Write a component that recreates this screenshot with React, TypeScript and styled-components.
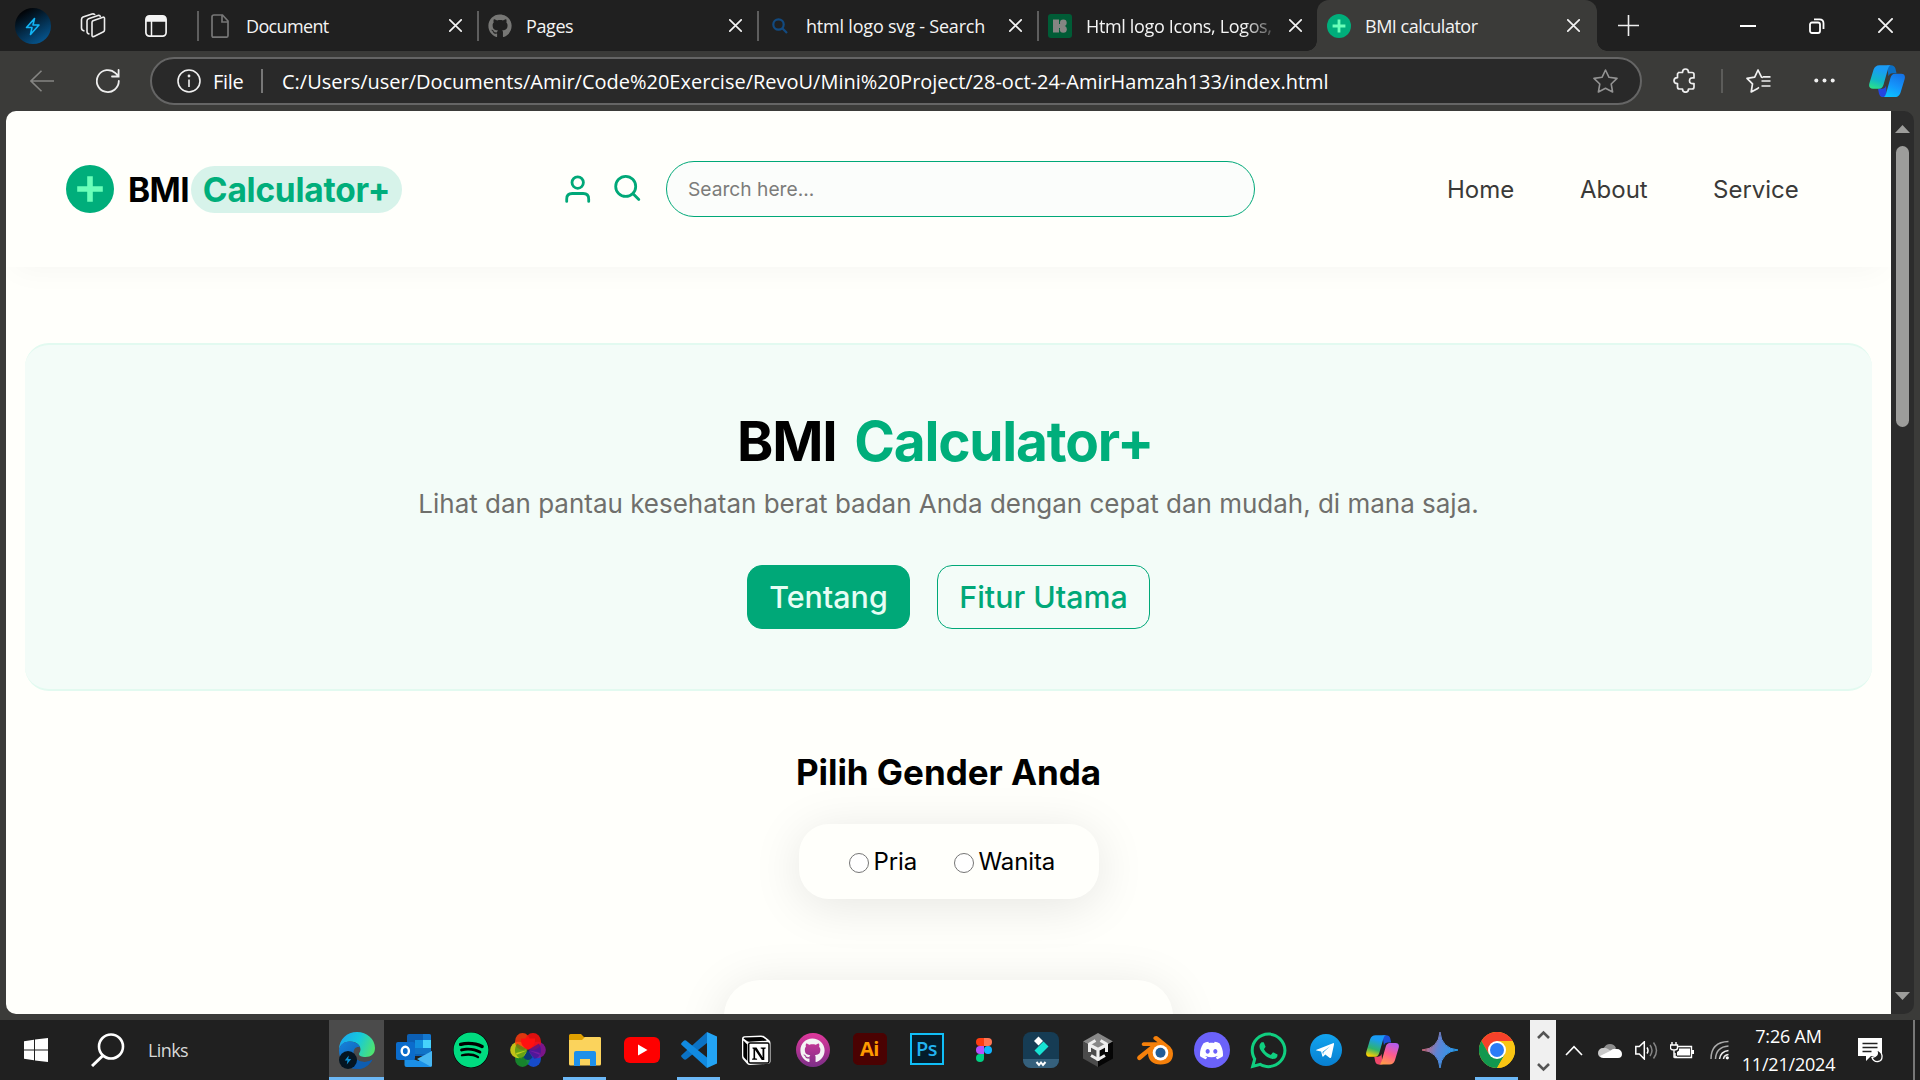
import React from 'react';
import styled, { createGlobalStyle } from 'styled-components';
import { FaGithub, FaSpotify, FaWhatsapp } from 'react-icons/fa';
import { SiDiscord } from 'react-icons/si';

const ui = '"Open Sans", "Noto Sans", sans-serif';
const green = '#00a878';

const Global = createGlobalStyle`
  * { box-sizing: border-box; }
  body { margin: 0; background: #202020; overflow: hidden; }
  svg { display: block; flex: none; }
`;

const Screen = styled.div`
  width: 1920px;
  height: 1080px;
  display: flex;
  flex-direction: column;
  overflow: hidden;
  background: #3b3b39;
  font-family: ${ui};
  white-space: nowrap;
`;

/* ---------- Tab strip ---------- */
const TabStrip = styled.div`
  height: 51px;
  background: #202020;
  display: flex;
  align-items: center;
`;
const Tools = styled.div`
  width: 197px;
  flex: none;
  padding-left: 15px;
  display: flex;
  align-items: center;
`;
const Slot = styled.div<{ $w: number }>`
  width: ${p => p.$w}px;
  height: 100%;
  display: flex;
  align-items: center;
  justify-content: center;
  flex: none;
`;
const Tab = styled.div`
  position: relative;
  width: 280px;
  height: 51px;
  flex: none;
  padding-right: 10px;
  display: flex;
  align-items: center;
`;
const ActiveTab = styled(Tab)`
  padding-left: 1px;
  padding-right: 12px;
  background: #3b3b39;
  border-radius: 12px 12px 0 0;
  &::before, &::after {
    content: "";
    position: absolute;
    bottom: 0;
    width: 10px;
    height: 10px;
  }
  &::before { left: -10px; background: radial-gradient(circle at 0 0, transparent 9.5px, #3b3b39 10px); }
  &::after { right: -10px; background: radial-gradient(circle at 100% 0, transparent 9.5px, #3b3b39 10px); }
`;
const TabIcon = styled.div`
  width: 24px;
  margin-left: 9px;
  flex: none;
  display: flex;
  justify-content: center;
`;
const Divider = styled.div<{ $h: number; $c?: string }>`
  width: 2px;
  height: ${p => p.$h}px;
  background: ${p => p.$c || '#5e5e5e'};
  flex: none;
`;
const TabTitle = styled.div<{ $ls?: number; $fade?: boolean }>`
  flex: 1;
  margin: 0 8px 0 14px;
  min-width: 0;
  overflow: hidden;
  font-size: 18px;
  line-height: 30px;
  letter-spacing: ${p => p.$ls ?? -0.5}px;
  color: #f4f4f4;
  ${p => p.$fade && 'mask-image: linear-gradient(90deg, #000 158px, rgba(0,0,0,.2) 188px);'}
`;
const WindowButtons = styled.div`
  flex: 1;
  padding-left: 81px;
  display: flex;
  align-items: center;
  gap: 53px;
`;

/* ---------- Toolbar ---------- */
const Toolbar = styled.div`
  height: 60px;
  display: flex;
  align-items: center;
`;
const NavButtons = styled.div`
  width: 150px;
  padding-left: 30px;
  display: flex;
  align-items: center;
  gap: 42px;
`;
const AddressBar = styled.div`
  width: 1492px;
  height: 48px;
  border: 2px solid #656565;
  border-radius: 24px;
  background: #292929;
  display: flex;
  align-items: center;
  padding-left: 25px;
  color: #fff;
  font-size: 20px;
`;
const FileLabel = styled.span`
  width: 48px;
  margin-left: 12px;
  letter-spacing: -0.3px;
`;
const Url = styled.span`
  flex: 1;
  margin-left: 19px;
  letter-spacing: -0.01px;
`;
const ToolbarEnd = styled.div`
  flex: 1;
  padding-left: 31px;
  display: flex;
  align-items: center;
`;
const Gap = styled.div<{ $w: number }>`
  width: ${p => p.$w}px;
  flex: none;
`;

/* ---------- Viewport ---------- */
const Viewport = styled.div`
  height: 903px;
  margin: 0 6px 6px;
  display: flex;
  border-radius: 10px;
  overflow: hidden;
`;
const Page = styled.div`
  width: 1885px;
  height: 903px;
  overflow: hidden;
  background: #fffffb;
  font-family: Inter, sans-serif;
  display: flex;
  flex-direction: column;
  align-items: center;
`;
const ScrollTrack = styled.div`
  width: 23px;
  background: #2c2c2c;
  display: flex;
  flex-direction: column;
  align-items: center;
  padding: 14px 0 14px;
`;
const Thumb = styled.div`
  width: 13px;
  height: 281px;
  margin: 13px 0 auto;
  border-radius: 7px;
  background: #9d9d9b;
`;
const Header = styled.header`
  width: 100%;
  height: 156px;
  flex: none;
  padding-left: 60px;
  display: flex;
  align-items: center;
  box-shadow: 0 10px 30px -8px rgba(0, 0, 0, 0.04);
`;
const Brand = styled.div`
  width: 499px;
  display: flex;
  align-items: center;
  font-size: 33.5px;
  font-weight: 700;
  letter-spacing: -0.6px;
  color: #000;
`;
const BrandName = styled.span`
  margin-left: 14px;
  padding-top: 2px;
  width: 63px;
`;
const Pill = styled.span`
  width: 211px;
  height: 47px;
  padding-top: 1px;
  line-height: 47px;
  border-radius: 24px;
  text-align: center;
  letter-spacing: -0.25px;
  color: #00ae7b;
  background: #d7f3ea;
`;
const HeaderIcons = styled.div`
  width: 101px;
  display: flex;
  gap: 23px;
`;
const SearchInput = styled.div`
  width: 589px;
  height: 56px;
  line-height: 55px;
  border: 1.5px solid ${green};
  border-radius: 28px;
  padding-left: 21px;
  background: #fbfdfb;
  font-size: 19.2px;
  color: #7c7c7a;
`;
const Nav = styled.nav`
  margin-left: 192px;
  display: flex;
  font-size: 24px;
  color: #3a3a38;
`;
const NavLink = styled.a<{ $w: number }>`
  width: ${p => p.$w}px;
`;

const Hero = styled.section`
  width: 1847px;
  height: 348px;
  flex: none;
  margin-top: 76px;
  border: solid #e2faf0;
  border-width: 2px 0;
  border-radius: 24px;
  background: #f3fcf8;
  display: flex;
  flex-direction: column;
  align-items: center;
`;
const HeroTitle = styled.h1`
  margin: 68px 7px 0 0;
  font-size: 55px;
  line-height: 56px;
  font-weight: 700;
  letter-spacing: -1.2px;
  color: #000;
`;
const Accent = styled.span`
  color: #00ae7b;
  margin-left: 6px;
`;
const Subtitle = styled.p`
  margin: 17px 0 43px;
  font-size: 26px;
  line-height: 36px;
  letter-spacing: -0.01px;
  color: #6f6f6c;
`;
const Actions = styled.div`
  display: flex;
  gap: 27px;
`;
const Action = styled.button<{ $primary?: boolean; $w: number }>`
  width: ${p => p.$w}px;
  height: 64px;
  padding: 0;
  border: 1.5px solid ${green};
  border-radius: 15px;
  background: ${p => (p.$primary ? green : 'transparent')};
  color: ${p => (p.$primary ? '#e6fdf4' : green)};
  font: 500 30.4px/60px Inter, sans-serif;
`;
const SectionTitle = styled.h2`
  margin: 59px 0 30px;
  font-size: 35px;
  line-height: 44px;
  font-weight: 700;
  letter-spacing: -0.04px;
  color: #000;
`;
const Card = styled.div<{ $w: number; $h: number; $r: number }>`
  width: ${p => p.$w}px;
  height: ${p => p.$h}px;
  flex: none;
  margin-bottom: 81px;
  border-radius: ${p => p.$r}px;
  background: #fffffb;
  box-shadow: 0 7px 50px rgba(0, 0, 0, 0.1);
  display: flex;
  align-items: center;
  padding-left: 50px;
`;
const RadioLabel = styled.label<{ $w: number }>`
  width: ${p => p.$w}px;
  display: flex;
  align-items: center;
  gap: 5px;
  font-size: 24px;
  letter-spacing: -0.1px;
  color: #000;
`;
const Radio = styled.span`
  width: 20px;
  height: 20px;
  margin-top: 3px;
  border: 1.5px solid #767676;
  border-radius: 50%;
  background: #fff;
`;

/* ---------- Taskbar ---------- */
const Taskbar = styled.div`
  height: 60px;
  background: #202020;
  display: flex;
  align-items: stretch;
`;
const LinksLabel = styled.div`
  width: 180px;
  flex: none;
  line-height: 60px;
  font-size: 18px;
  letter-spacing: -0.6px;
  color: #d8d8d8;
`;
const AppButton = styled.div<{ $state?: 'active' | 'open' }>`
  width: 57px;
  flex: none;
  display: flex;
  align-items: center;
  justify-content: center;
  background: ${p => (p.$state === 'active' ? 'linear-gradient(#4b4b4b,#4b4b4b) 1px 0 / 55px 60px no-repeat' : 'none')};
  position: relative;
  &::after {
    content: ${p => (p.$state ? '""' : 'none')};
    position: absolute;
    bottom: 0;
    left: ${p => (p.$state === 'active' ? 1 : 7)}px;
    right: ${p => (p.$state === 'active' ? 1 : 7)}px;
    height: 3px;
    background: #6cb8f6;
  }
`;
const AppTile = styled.div<{ $bg: string; $fg: string; $line: string; $bold?: boolean }>`
  width: 34px;
  height: 32px;
  margin-bottom: 3px;
  border: 2px solid ${p => p.$line};
  border-radius: ${p => (p.$bg === p.$line ? 5 : 0)}px;
  background: ${p => p.$bg};
  color: ${p => p.$fg};
  font: ${p => (p.$bold ? 700 : 600)} 20px/27px "Open Sans", sans-serif;
  letter-spacing: -0.5px;
  text-align: center;
`;
const ScrollBox = styled.div`
  width: 26px;
  flex: none;
  margin-left: 5px;
  background: #f0f0f0;
  display: flex;
  flex-direction: column;
  align-items: center;
  justify-content: space-between;
  padding: 10px 0 8px;
`;
const Tray = styled.div`
  width: 177px;
  flex: none;
  padding-left: 9px;
  display: flex;
  align-items: center;
`;
const Clock = styled.div`
  width: 111px;
  flex: none;
  padding-top: 2px;
  color: #fff;
  font-size: 18px;
  line-height: 28px;
  letter-spacing: -0.2px;
  text-align: center;
`;
const NoteArea = styled.div`
  width: 69px;
  flex: none;
  display: flex;
  align-items: center;
  padding-left: 14px;
`;

/* ---------- Drawings ---------- */
const Cross = ({ s = 13, w = 1.7 }: { s?: number; w?: number }) => (
  <svg width={s} height={s} viewBox="0 0 13 13" stroke="#f2f2f2" strokeWidth={w} strokeLinecap="round">
    <path d="M.8.8l11.4 11.4M12.2.8L.8 12.2" />
  </svg>
);
const PlusBadge = ({ size }: { size: number }) => (
  <svg width={size} height={size} viewBox="0 0 48 48">
    <circle cx="24" cy="24" r="24" fill="#00ae7b" />
    <path d="M24 14v20M14 24h20" stroke="#6affb9" strokeWidth="5.6" strokeLinecap="square" />
  </svg>
);
const Bolt = ({ size }: { size: number }) => (
  <svg width={size} height={size} viewBox="0 0 36 36">
    <defs>
      <linearGradient id="bolt" x1=".2" y1="0" x2=".8" y2="1">
        <stop offset=".1" stopColor="#020509" /><stop offset="1" stopColor="#065a96" />
      </linearGradient>
    </defs>
    <circle cx="18" cy="18" r="18" fill="url(#bolt)" />
    <path d="M19.5 10.5l-8 9h5.5l-1.5 7 8.500-9.500h-6z" fill="#07345a" stroke="#12b5f5" strokeWidth="1.6" strokeLinejoin="round" />
  </svg>
);
const Copilot = ({ size, warm }: { size: number; warm?: boolean }) => {
  const id = warm ? 'w' : 'c';
  return (
    <svg width={size} height={size * 0.9} viewBox="0 0 36 32">
      <defs>
        <linearGradient id={id + 'a'} x1=".6" y1="0" x2=".3" y2="1">
          <stop offset=".2" stopColor="#1a9cf5" /><stop offset=".65" stopColor={warm ? '#2fb46b' : '#11b7c8'} /><stop offset="1" stopColor={warm ? '#ffd000' : '#2adf8c'} />
        </linearGradient>
        <linearGradient id={id + 'b'} x1=".7" y1="0" x2=".3" y2="1">
          <stop offset="0" stopColor={warm ? '#b45cf0' : '#1573e6'} /><stop offset=".5" stopColor={warm ? '#ff5b8c' : '#1494fb'} /><stop offset="1" stopColor={warm ? '#ff9b4a' : '#0bc2ff'} />
        </linearGradient>
      </defs>
      <path d="M18 0h4q3.500 0 4.500 3.500L27.500 8h-4q-3 0-4 3z" fill={warm ? '#1d50d8' : '#0b6fc4'} />
      <path d="M18 32h-4q-3 0-4-3.500L9 23.500h4q3 0 4-3z" fill={warm ? '#f0486a' : '#2445e0'} />
      <path d="M10.500 0H22q-2 0-3 3.500L14.500 19.500Q13.300 23.500 10 23.500H4Q-1 23.500.4 18L4.500 4.500Q6 0 10.500 0z" fill={`url(#${id}a)`} />
      <path d="M25.500 32H14q2 0 3-3.500l4.500-16Q22.700 8.500 26 8.500h6q5 0 3.600 5.500L31.500 27.500Q30 32 25.500 32z" fill={`url(#${id}b)`} />
    </svg>
  );
};
const Chevron = ({ up, w, h, c, sw }: { up?: boolean; w: number; h: number; c: string; sw: number }) => (
  <svg width={w} height={h} viewBox={`0 0 ${w} ${h}`} fill="none" stroke={c} strokeWidth={sw}>
    <path d={up ? `M1 ${h - 1}L${w / 2} ${sw}L${w - 1} ${h - 1}` : `M1 1L${w / 2} ${h - sw}L${w - 1} 1`} />
  </svg>
);

const EdgeLogo = () => (
  <svg width="36" height="37" viewBox="0 0 36 37">
    <defs>
      <linearGradient id="eg" x1="0" y1=".3" x2="1" y2=".6"><stop offset="0" stopColor="#1aa7ee" /><stop offset=".5" stopColor="#15c9dd" /><stop offset="1" stopColor="#4fe36f" /></linearGradient>
      <linearGradient id="eb" x1="0" y1="0" x2="1" y2="1"><stop offset="0" stopColor="#1683dd" /><stop offset="1" stopColor="#0b4c9d" /></linearGradient>
    </defs>
    <path d="M0 18C0 7 8 0 18 0s18 7 18 16c0 6-4 9-9.500 9-4 0-6.500-1-6.500-3 0-1.500 1.500-2 1.500-4.500C21.500 13 17 9.500 11 9.500 5 9.500 1 13 0 18z" fill="url(#eg)" />
    <path d="M0 18C1 12 5.500 9.500 11 9.500c5 0 9 2.500 10.200 6-3-1.500-6.700.5-6.700 5.500 0 6 6 9 11 9 3 0 5.500-1 8-2.500C30.500 33 25 37 18 37 7 37 0 29 0 18z" fill="url(#eb)" />
    <path d="M14.500 21c0 6 6 9 11 9 3 0 5.500-1 8-2.500C30.500 33 25 37 20 37c-7-1-9-10-5.500-16z" fill="#0e5eb0" />
    <g transform="translate(0 19) scale(.5)"><circle cx="18" cy="18" r="18" fill="#041522" /><path d="M19.500 9l-8 10h5.500l-1.500 8 9-11h-6z" fill="#0c93d8" /></g>
  </svg>
);
const OutlookLogo = () => (
  <svg width="36" height="33" viewBox="0 0 36 33">
    <rect x="11" y="0" width="24" height="22" rx="2" fill="#0c5fb4" />
    <path d="M19 6h8v8h-8z" fill="#1290df" /><path d="M27 6h8v8h-8z" fill="#46d2fb" /><path d="M27 0h6a2 2 0 012 2v4h-8z" fill="#1478cf" /><path d="M19 14h16v6H19z" fill="#1173c7" />
    <path d="M8.500 22l14 5 13.500-10v14a2 2 0 01-2 2h-23.500a2 2 0 01-2-2z" fill="#1b8fe6" /><path d="M36 17v14a2 2 0 01-1 1.700L21 25z" fill="#48b7f2" />
    <rect x="0" y="8" width="19" height="18" rx="2" fill="#0b6ccc" />
    <ellipse cx="9.300" cy="17" rx="3.600" ry="4.300" fill="none" stroke="#fff" strokeWidth="2.400" />
  </svg>
);
const PetalsLogo = () => (
  <svg width="36" height="34" viewBox="0 0 36 34">
    <g fillOpacity=".85">
      <ellipse cx="23.500" cy="25.500" rx="7.500" ry="8.500" fill="#1554e8" /><ellipse cx="12.500" cy="25.500" rx="7.500" ry="8.500" fill="#16952f" />
      <circle cx="8.500" cy="17" r="8.300" fill="#dfe018" /><circle cx="27.500" cy="17" r="8.300" fill="#8b149c" />
      <ellipse cx="12.500" cy="8.500" rx="7.500" ry="8.500" fill="#ff3b0d" /><ellipse cx="23" cy="8.500" rx="8" ry="8.500" fill="#ff0d0d" />
    </g>
    <path d="M11 5.500h14q1 7-7 11.500-8-4-7-11.500z" fill="#ff1010" />
    <path d="M18 17L7 10.500Q3.500 17 6 22zM18 17l-6.500 9Q6 24 6 20z" fill="#3f8f14" fillOpacity=".7" />
    <path d="M18 17l11-6.500q3.500 6 1 11.500zM18 17l6.500 9Q30 24 30 20z" fill="#3d1696" fillOpacity=".7" />
    <path d="M18 17l-4.500 7.500q4.500 5 9 0z" fill="#0b3a78" />
  </svg>
);
const FolderLogo = () => (
  <svg width="32" height="32" viewBox="0 0 32 32">
    <path d="M0 1.500Q0 0 1.500 0H12l3 3H30.500Q32 3 32 4.500V10H0z" fill="#e0a000" />
    <path d="M0 6h13l3-3h14.500Q32 3 32 4.500V30q0 1.500-1.500 1.500h-29Q0 31.500 0 30z" fill="#fbd35c" />
    <path d="M5 32V19q0-2 2-2h18q2 0 2 2v13h-6v-7H11v7z" fill="#1e90ea" />
  </svg>
);
const YouTubeLogo = () => (
  <svg width="36" height="26" viewBox="0 0 36 26"><rect width="36" height="26" rx="6" fill="#f00" /><path d="M14 7.500v11l9.500-5.500z" fill="#fff" /></svg>
);
const CodeLogo = () => (
  <svg width="36" height="36" viewBox="0 0 36 36">
    <path d="M26 0L36 4.500v27L26 36z" fill="#23a4f5" />
    <path d="M26 0v11L5 27.500Q3.500 28 2.500 27L.5 25Q-.3 24 .7 23z" fill="#0b72c4" />
    <path d="M26 36V25.500L5 8.500Q3.500 8 2.500 9L.5 11Q-.3 12 .7 13z" fill="#118ae0" />
  </svg>
);
const NotionLogo = () => (
  <svg width="30" height="31" viewBox="0 0 30 31">
    <path d="M1 3.500Q1 1.500 3 1.300L20 .5q2 0 3.500 1L28 5q1.500 1 1.500 3v18.500q0 2-2 2.200L9 30q-2 0-3-1.300L1.800 24Q1 23 1 21z" fill="#fff" />
    <path d="M2.500 3.500Q3 2.700 4 2.600L20 1.900q1 0 2 .6l3.500 2.500q.5.600-.5.700L8 6.700Q7 6.700 6 6zM2.300 5.500L6.300 9.500V26L3 22.500q-.7-1-.7-2z" fill="#000" />
    <rect x="7.700" y="8" width="20.300" height="20" rx="1.500" fill="none" stroke="#000" strokeWidth="1.500" />
    <path d="M11.500 12.500h4l6 9.500v-8l-1.800-.6v-.9h5v.9l-1.400.5V25h-2.500l-6.700-10v8.300l2 .5v.9h-5v-.9l1.400-.5v-9.200l-1-.6z" fill="#000" />
  </svg>
);
const GithubDesktop = styled.div`
  width: 34px;
  height: 34px;
  border-radius: 50%;
  background: linear-gradient(#e0389c, #7b2f87);
  display: flex;
  align-items: center;
  justify-content: center;
`;
const FigmaLogo = () => (
  <svg width="16" height="24" viewBox="0 0 16 24">
    <path d="M4 0h4v8H4a4 4 0 010-8z" fill="#ff3d12" /><path d="M8 0h4a4 4 0 010 8H8z" fill="#ff7452" />
    <path d="M4 8h4v8H4a4 4 0 010-8z" fill="#b850ff" /><circle cx="12" cy="12" r="4" fill="#0fb4ff" />
    <path d="M4 16h4v4a4 4 0 11-4-4z" fill="#00d084" />
  </svg>
);
const FilmoraLogo = () => (
  <svg width="36" height="36" viewBox="0 0 36 36">
    <rect width="36" height="36" rx="8" fill="#163c54" /><path d="M0 27h36v1a8 8 0 01-8 8H8a8 8 0 01-8-8z" fill="#35607c" />
    <path d="M15.500 4.500l4.500 4.500-4.500 4.500L11 9z" fill="#fff" /><path d="M20.500 9.500L25.500 14.500 16.500 23.500 11.500 18.500z" fill="#17e3d3" />
    <path d="M13.500 30l2.500 3 2-2.500 2 2.500 2.500-3" fill="none" stroke="#fff" strokeWidth="2" />
  </svg>
);
const UnityLogo = () => (
  <svg width="30" height="34" viewBox="0 0 30 34">
    <path d="M15 0l15 8.500L15 17 0 8.500z" fill="#888" /><path d="M0 8.500L15 17v17L0 25.500z" fill="#4b4b4b" /><path d="M30 8.500L15 17v17l15-8.500z" fill="#050505" />
    <path d="M15 16.500v11M15 16.500L6.500 12M15 16.500l8.500-4.500" stroke="#eee" strokeWidth="3.200" />
    <path d="M12.500 7.500L6.500 11v8M17.500 7.500l6 3.500v8M8 22.500l7 4 7-4" fill="none" stroke="#eee" strokeWidth="3" strokeLinejoin="round" />
  </svg>
);
const BlenderLogo = () => (
  <svg width="36" height="29" viewBox="0 0 36 29">
    <path d="M17.300.6q2-1.200 4 .4L33 10.500q3 3 3 7Q36 28.500 23.500 28.500 11.500 28 11 17.500L4 23.500Q2 25 .6 23.300q-1.200-2 .6-3.500L13.500 10H6.500q-1.800-.2-1.800-1.800T6.500 6.300h14L17 3.500q-1.500-1.500.3-2.900z" fill="#f5800b" />
    <circle cx="23.500" cy="16.800" r="7.800" fill="#fff" /><circle cx="23.500" cy="16.800" r="5" fill="#225c96" />
  </svg>
);
const DiscordBadge = styled.div`
  width: 36px;
  height: 36px;
  border-radius: 50%;
  background: #6b62fa;
  display: flex;
  align-items: center;
  justify-content: center;
`;
const TelegramLogo = () => (
  <svg width="32" height="32" viewBox="0 0 32 32">
    <defs><linearGradient id="tg" x1="0" y1="0" x2="0" y2="1"><stop offset="0" stopColor="#12a4ef" /><stop offset="1" stopColor="#087fd0" /></linearGradient></defs>
    <circle cx="16" cy="16" r="16" fill="url(#tg)" />
    <path d="M6.500 15.700L23 9.200q1.300-.4 1 1.300L21.300 23q-.4 1.500-1.800.7l-4.200-3.200-2 2q-.8.600-1-.5l-1.200-4.500-4.600-1q-1-.4 0-.8zM12.500 18l.6 2.800.4-2.600 6.500-6z" fill="#fff" fillRule="evenodd" />
  </svg>
);
const GeminiLogo = () => (
  <svg width="36" height="36" viewBox="0 0 36 36">
    <defs><linearGradient id="gm" x1="0" y1=".3" x2="1" y2=".6"><stop offset=".1" stopColor="#c8687c" /><stop offset=".45" stopColor="#5d84d6" /><stop offset="1" stopColor="#1c9ef0" /></linearGradient></defs>
    <path d="M18 0Q19.500 16.500 36 18 19.500 19.500 18 36 16.500 19.500 0 18 16.500 16.500 18 0z" fill="url(#gm)" stroke="url(#gm)" strokeWidth="1" />
  </svg>
);
const ChromeLogo = () => (
  <svg width="36" height="36" viewBox="0 0 36 36">
    <circle cx="18" cy="18" r="18" fill="#f9c513" />
    <path d="M2.400 9A18 18 0 0133.600 9H18l-7.800 13.500z" fill="#f7412a" />
    <path d="M2.400 9A18 18 0 0018 36l7.800-13.500-7.800-1-7.800 1z" fill="#12984f" />
    <path d="M18 36l7.800-13.500L24 14l2-5h7.600A18 18 0 0118 36z" fill="#f9c513" />
    <circle cx="18" cy="18" r="9" fill="#fff" /><circle cx="18" cy="18" r="7" fill="#2b7cf7" />
  </svg>
);
const SpotifyBadge = styled.div`
  border-radius: 50%;
  background: #000;
`;

type AppEntry = { name: string; state?: 'active' | 'open'; icon: React.ReactNode };
const apps: AppEntry[] = [
  { name: 'edge', state: 'active', icon: <EdgeLogo /> },
  { name: 'outlook', icon: <OutlookLogo /> },
  { name: 'spotify', icon: <SpotifyBadge><FaSpotify size={36} color="#00db80" /></SpotifyBadge> },
  { name: 'petals', icon: <PetalsLogo /> },
  { name: 'explorer', state: 'open', icon: <FolderLogo /> },
  { name: 'youtube', icon: <YouTubeLogo /> },
  { name: 'code', state: 'open', icon: <CodeLogo /> },
  { name: 'notion', icon: <NotionLogo /> },
  { name: 'github', icon: <GithubDesktop><FaGithub size={25} color="#f4f4f4" /></GithubDesktop> },
  { name: 'illustrator', icon: <AppTile $bold $bg="#4b0202" $line="#4b0202" $fg="#ff9a00">Ai</AppTile> },
  { name: 'photoshop', icon: <AppTile $bg="#041c2a" $line="#10bff8" $fg="#22b2ef">Ps</AppTile> },
  { name: 'figma', icon: <FigmaLogo /> },
  { name: 'filmora', icon: <FilmoraLogo /> },
  { name: 'unity', icon: <UnityLogo /> },
  { name: 'blender', icon: <BlenderLogo /> },
  { name: 'discord', icon: <DiscordBadge><SiDiscord size={23} color="#fff" /></DiscordBadge> },
  { name: 'whatsapp', icon: <FaWhatsapp size={41} color="#10cf80" /> },
  { name: 'telegram', icon: <TelegramLogo /> },
  { name: 'copilot', icon: <Copilot size={33} warm /> },
  { name: 'gemini', icon: <GeminiLogo /> },
  { name: 'chrome', state: 'open', icon: <ChromeLogo /> },
];

const tabs = [
  { title: 'Document', ls: -0.65, icon: <svg width="18" height="24" viewBox="0 0 18 24" fill="none" stroke="#767676" strokeWidth="1.700"><path d="M3 1h8.500L17 7v14.500q0 1.700-1.700 1.700H2.700Q1 23.200 1 21.500V3q0-2 2-2zM11 1v7h6" /></svg> },
  { title: 'Pages', ls: -0.4, icon: <FaGithub size={24} color="#777775" /> },
  { title: 'html logo svg - Search', ls: -0.2, icon: <svg width="16" height="16" viewBox="0 0 16 16" fill="none" stroke="#124a80" strokeWidth="2.200"><circle cx="6.500" cy="6.500" r="5.200" /><path d="M10.300 10.300L15 15" /></svg> },
  { title: 'Html logo Icons, Logos,', ls: -0.35, fade: true, icon: <svg width="24" height="24" viewBox="0 0 24 24"><rect width="24" height="24" rx="3" fill="#005c36" /><path d="M5 5.500h6v13H5z" fill="#858583" /><circle cx="15.300" cy="8.800" r="3.400" fill="#858583" /><circle cx="15.300" cy="15.200" r="3.500" fill="#858583" /><path d="M10 10h5v4h-5z" fill="#858583" /></svg> },
];

export default function App() {
  return (
    <Screen>
      <Global />
      <TabStrip>
        <Tools>
          <Bolt size={36} />
          <Slot $w={84}>
            <svg width="26" height="25" viewBox="0 0 26 25" fill="none" stroke="#ececec" strokeWidth="1.600" strokeLinejoin="round">
              <path d="M12 9.500q0-1.200 1-1.700l10-3.600q1.500-.3 1.500 1V17q0 1.200-1 1.700l-9.500 4.800Q12 24 12 22.500z" />
              <path d="M9.500 21q-2.500-.3-2.500-2.500V8q0-1.600 1.500-2.200L18 2.500q2-.5 2.500 1.500" />
              <path d="M4.500 18q-3-.5-3-3V6.500Q1.500 4.800 3 4l9-3q2.200-.6 3 1" />
            </svg>
          </Slot>
          <Slot $w={42}>
            <svg width="22" height="22" viewBox="0 0 22 22"><rect x=".9" y=".9" width="20.200" height="20.200" rx="3.500" fill="none" stroke="#f4f4f4" strokeWidth="1.700" /><path d="M1 4q0-3 3-3h14q3 0 3 3v2.800H1z" fill="#f4f4f4" /><path d="M6.500 6v15" stroke="#f4f4f4" strokeWidth="1.500" /></svg>
          </Slot>
        </Tools>
        {tabs.map(t => (
          <Tab key={t.title}>
            <Divider $h={30} />
            <TabIcon>{t.icon}</TabIcon>
            <TabTitle $ls={t.ls} $fade={t.fade}>{t.title}</TabTitle>
            <Slot $w={24}><Cross /></Slot>
          </Tab>
        ))}
        <ActiveTab>
          <TabIcon><PlusBadge size={24} /></TabIcon>
          <TabTitle>BMI calculator</TabTitle>
          <Slot $w={24}><Cross /></Slot>
        </ActiveTab>
        <Slot $w={62}>
          <svg width="21" height="21" viewBox="0 0 21 21" stroke="#eee" strokeWidth="1.600"><path d="M10.500 0v21M0 10.500h21" /></svg>
        </Slot>
        <WindowButtons>
          <svg width="16" height="2"><rect width="16" height="2" fill="#fff" /></svg>
          <svg width="16" height="16" viewBox="0 0 16 16" fill="none" stroke="#fff" strokeWidth="1.800"><rect x="1" y="4.500" width="10" height="10.500" rx="2" /><path d="M5 1.300h5.500q4 0 4 4V11" /></svg>
          <Cross s={15} w={1.6} />
        </WindowButtons>
      </TabStrip>

      <Toolbar>
        <NavButtons>
          <svg width="24" height="22" viewBox="0 0 24 22" fill="none" stroke="#858583" strokeWidth="1.600"><path d="M24 11H1M11.500.8L1 11l10.500 10.200" /></svg>
          <svg width="24" height="24" viewBox="0 0 24 24" fill="none" stroke="#eee" strokeWidth="1.800" strokeLinecap="round"><path d="M22.800 12A11 11 0 1119.500 4.200L22.500 7M22.600 1v6.500H16" /></svg>
        </NavButtons>
        <AddressBar>
          <svg width="24" height="24" viewBox="0 0 24 24" fill="none" stroke="#f0f0f0" strokeWidth="1.600"><circle cx="12" cy="12" r="11" /><path d="M12 10.500v7.500" /><circle cx="12" cy="7" r=".6" fill="#fff" /></svg>
          <FileLabel>File</FileLabel>
          <Divider $h={24} $c="#777" />
          <Url>C:/Users/user/Documents/Amir/Code%20Exercise/RevoU/Mini%20Project/28-oct-24-AmirHamzah133/index.html</Url>
          <Slot $w={70}><svg width="25" height="24" viewBox="0 0 25 24" fill="none" stroke="#929292" strokeWidth="1.600" strokeLinejoin="round"><path d="M12.500 1l3.500 7.300 8 1.100-5.800 5.600 1.400 8-7.100-3.800L5.400 23l1.400-8L1 9.400l8-1.100z" /></svg></Slot>
        </AddressBar>
        <ToolbarEnd>
          <svg width="24" height="25" viewBox="0 0 24 25" fill="none" stroke="#eee" strokeWidth="1.700" strokeLinejoin="round"><path d="M5 4.500h4.500Q9.500 1 12.500 1t3 3.500H19q2 0 2 2V10q-4.500-.8-4.500 2.700T21 15.500v3.500q0 2-2 2h-3.500Q15.500 24.200 12.500 24.200T9.500 21H6.500q-2 0-2-2v-3.500Q1 15.500 1 12.700t3.500-3V6.500q0-2 2-2" /></svg>
          <Gap $w={24} />
          <Divider $h={24} $c="#5c5c5a" />
          <Gap $w={23} />
          <svg width="25" height="24" viewBox="0 0 25 24" fill="none" stroke="#f0f0f0" strokeWidth="1.700" strokeLinejoin="round"><path d="M17 8.500l-1.500-.3L12 1 8.700 8.200 1 9.400l5.500 5.500L5.200 23l6.500-3.600 1.300-1M15.500 12h9M15.500 17h9M17 7.800h7.500" /></svg>
          <Gap $w={43} />
          <svg width="21" height="5" viewBox="0 0 21 5" fill="#f0f0f0"><circle cx="2.300" cy="2.500" r="2" /><circle cx="10.500" cy="2.500" r="2" /><circle cx="18.700" cy="2.500" r="2" /></svg>
          <Gap $w={34} />
          <Copilot size={36} />
        </ToolbarEnd>
      </Toolbar>

      <Viewport>
        <Page>
          <Header>
            <Brand>
              <PlusBadge size={48} />
              <BrandName>BMI</BrandName>
              <Pill>Calculator+</Pill>
            </Brand>
            <HeaderIcons>
              <svg width="26" height="28" viewBox="0 0 26 28" fill="none" stroke={green} strokeWidth="2.800" strokeLinecap="round"><circle cx="12.700" cy="7.600" r="5.700" /><path d="M1.700 26.400v-2.400q0-5.500 5.500-5.500h11q5.500 0 5.500 5.500v2.400" /></svg>
              <svg width="27" height="27" viewBox="0 0 27 27" fill="none" stroke={green} strokeWidth="2.800" strokeLinecap="round"><circle cx="11.700" cy="11.400" r="10" /><path d="M19.300 19l5.500 5.500" /></svg>
            </HeaderIcons>
            <SearchInput>Search here...</SearchInput>
            <Nav>
              <NavLink $w={133}>Home</NavLink>
              <NavLink $w={133}>About</NavLink>
              <NavLink $w={90}>Service</NavLink>
            </Nav>
          </Header>
          <Hero>
            <HeroTitle>BMI <Accent>Calculator+</Accent></HeroTitle>
            <Subtitle>Lihat dan pantau kesehatan berat badan Anda dengan cepat dan mudah, di mana saja.</Subtitle>
            <Actions>
              <Action $primary $w={163}>Tentang</Action>
              <Action $w={213}>Fitur Utama</Action>
            </Actions>
          </Hero>
          <SectionTitle>Pilih Gender Anda</SectionTitle>
          <Card $w={300} $h={75} $r={30}>
            <RadioLabel $w={105}><Radio />Pria</RadioLabel>
            <RadioLabel $w={110}><Radio />Wanita</RadioLabel>
          </Card>
          <Card $w={449} $h={200} $r={36} />
        </Page>
        <ScrollTrack>
          <svg width="15" height="8"><path d="M0 8L7.500 0 15 8z" fill="#9d9d9b" /></svg>
          <Thumb />
          <svg width="15" height="8"><path d="M0 0h15L7.500 8z" fill="#9d9d9b" /></svg>
        </ScrollTrack>
      </Viewport>

      <Taskbar>
        <Slot $w={72}><svg width="24" height="24" viewBox="0 0 24 24" fill="#fff"><path d="M0 3.300l10-1.500v9.700H0zM11 1.600L24 0v11.500H11zM0 12.500h10v9.700L0 20.700zM11 12.500h13V24l-13-1.600z" /></svg></Slot>
        <Slot $w={71}><svg width="34" height="34" viewBox="0 0 34 34" fill="none" stroke="#fff" strokeWidth="2.600"><circle cx="20" cy="13.500" r="12" /><path d="M12 22.500L1 33" strokeWidth="3" /></svg></Slot>
        <Gap $w={5} />
        <LinksLabel>Links</LinksLabel>
        {apps.map(a => <AppButton key={a.name} $state={a.state}>{a.icon}</AppButton>)}
        <ScrollBox>
          <Chevron up w={13} h={9} c="#555" sw={2.6} />
          <Chevron w={13} h={9} c="#555" sw={2.6} />
        </ScrollBox>
        <Tray>
          <Chevron up w={18} h={11} c="#fff" sw={1.6} />
          <Gap $w={15} />
          <svg width="24" height="16" viewBox="0 0 24 16"><path d="M6 6a6.500 6.500 0 0112 0l-6 5z" fill="#8d8d8d" /><path d="M0 11a5 5 0 015-5q2-.5 4 .5l7 4-13 5Q0 14 0 11z" fill="#c9c9c9" /><path d="M2 14l10-5q3-3 7-2a5 5 0 015 5q0 4-4 4H5q-2 0-3-2z" fill="#fff" /></svg>
          <Gap $w={13} />
          <svg width="23" height="19" viewBox="0 0 23 19" fill="none" stroke="#fff" strokeWidth="1.500"><path d="M.8 5.500v7.500h3.500l5 5V.8l-5 4.700zM12 6.500q2 3 0 6" /><path d="M15 4q4 5.500 0 11M18.500 1.500q6 8 0 16" stroke="#858585" /></svg>
          <Gap $w={12} />
          <svg width="24" height="17" viewBox="0 0 24 17"><path d="M8 4.500h13.500v11H5V11" fill="none" stroke="#fff" strokeWidth="1.400" /><path d="M9 6.500h11v7H7V10l2-1.500z" fill="#fff" /><path d="M21.500 8H24v4h-2.500z" fill="#fff" /><path d="M2 0v3M6 0v3M.5 3h7v3q0 2-3.500 2T.5 6zM4 8v7h3" fill="none" stroke="#fff" strokeWidth="1.400" /></svg>
          <Gap $w={16} />
          <svg width="20" height="20" viewBox="0 0 20 20" fill="none" stroke="#aaa" strokeWidth="1.500"><path d="M1 19Q1 2 18.500 1.500M5.500 19Q6 7 18.500 6" /><path d="M9.500 19q1-7.500 9-8.500M13.500 19q.5-4 5-4.500" stroke="#eee" /><circle cx="17.300" cy="17.800" r="1.600" fill="#fff" stroke="none" /></svg>
        </Tray>
        <Clock>7:26 AM<br />11/21/2024</Clock>
        <NoteArea>
          <svg width="25" height="25" viewBox="0 0 25 25"><path d="M0 0h24v18H13l-5 5v-5H0z" fill="#fff" /><path d="M4.500 5.500h15M4.500 9.500h15M4.500 13.500h9" stroke="#222" strokeWidth="1.400" /><path d="M18.500 12q3 6-4.500 7.500 1.500 4.500 6 4t4-6q-.5-4-5.500-5.500z" fill="#222" stroke="#fff" strokeWidth="1.300" /></svg>
        </NoteArea>
        <Divider $h={60} $c="#777" />
      </Taskbar>
    </Screen>
  );
}
